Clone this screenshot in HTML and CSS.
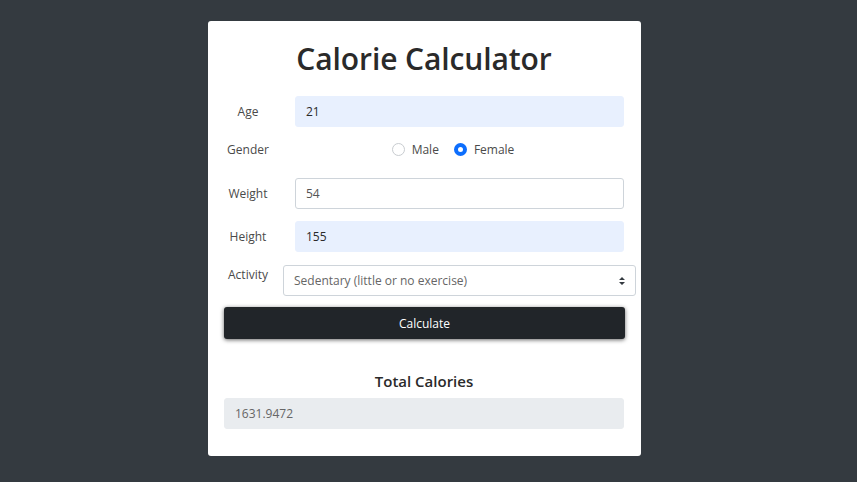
FILE: index.html
```html
<!DOCTYPE html>
<html>
<head>
<meta charset="utf-8">
<link rel="stylesheet" href="styles.css">
</head>
<body>
<div class="card">
  <h1 class="title">Calorie Calculator</h1>
  <div class="row row-age">
    <span class="label">Age</span>
    <div class="field autofill">21</div>
  </div>
  <div class="row row-gender">
    <span class="label">Gender</span>
    <div class="radios">
      <span class="radio"><span class="dot"></span>Male</span>
      <span class="radio"><span class="dot checked"></span>Female</span>
    </div>
  </div>
  <div class="row row-weight">
    <span class="label">Weight</span>
    <div class="field">54</div>
  </div>
  <div class="row row-height">
    <span class="label">Height</span>
    <div class="field autofill">155</div>
  </div>
  <div class="row row-activity">
    <span class="label label-up">Activity</span>
    <div class="field select">Sedentary (little or no exercise)
      <svg class="caret" width="8" height="10" viewBox="0 0 8 10"><path d="M1 4 L4 1 L7 4 Z M1 6 L4 9 L7 6 Z" fill="#343a40"/></svg>
    </div>
  </div>
  <div class="btn">Calculate</div>
  <h2 class="total">Total Calories</h2>
  <div class="field output">1631.9472</div>
</div>
</body>
</html>
```
FILE: styles.css
```css
html, body {
  margin: 0;
  padding: 0;
}
body {
  background: #343a40;
  font-family: "Open Sans", "Noto Sans", sans-serif;
  color: #212529;
  width: 857px;
  height: 482px;
  overflow: hidden;
}
.card {
  box-sizing: border-box;
  width: 433px;
  height: 435px;
  margin: 21px 0 0 208px;
  background: #fff;
  border-radius: 3px;
  padding: 0 17px 0 16px;
  display: flex;
  flex-direction: column;
}
.title {
  margin: 18px 0 0 0;
  text-align: center;
  font-size: 30px;
  font-weight: 600;
  line-height: 40px;
  color: #2a2a2a;
  letter-spacing: -0.1px;
}
.row {
  display: flex;
  align-items: center;
}
.label {
  width: 48px;
  text-align: center;
  font-size: 12px;
  color: #4a4a4a;
  flex: none;
}
.label-up {
  align-self: flex-start;
  margin-top: 1px;
}
.field {
  box-sizing: border-box;
  height: 31px;
  flex: 1;
  margin-left: 23px;
  border: 1px solid #ced4da;
  border-radius: 3px;
  font-size: 12px;
  color: #555;
  padding: 0 10px;
  display: flex;
  align-items: center;
  background: #fff;
}
.autofill {
  background: #e8f0fe;
  border-color: #e8f0fe;
  color: #2a2a2a;
}
.row-age { margin-top: 17px; }
.row-gender { margin-top: 11px; height: 22px; }
.row-weight { margin-top: 18px; }
.row-height { margin-top: 12px; }
.row-activity { margin-top: 13px; align-items: flex-start; }
.radios {
  flex: 1;
  display: flex;
  justify-content: center;
  gap: 15px;
  font-size: 12px;
  color: #4a4a4a;
  padding-left: 10px;
}
.radio {
  display: flex;
  align-items: center;
  gap: 7px;
}
.dot {
  box-sizing: border-box;
  width: 13px;
  height: 13px;
  border-radius: 50%;
  border: 1px solid #c8ccd0;
  background: #fff;
}
.dot.checked {
  border: 4px solid #0d6efd;
  background: #fff;
}
.select {
  margin-left: 11px;
  margin-right: -12px;
  height: 31px;
  justify-content: space-between;
  padding-right: 9px;
  color: #666;
}
.caret { flex: none; }
.btn {
  margin-top: 11px;
  height: 32px;
  background: #212529;
  color: #fff;
  border-radius: 3px;
  font-size: 12px;
  display: flex;
  align-items: center;
  justify-content: center;
  box-shadow: 0 1px 4px rgba(0,0,0,0.6);
  margin-right: -1px;
}
.total {
  margin: 31px 0 0 0;
  text-align: center;
  font-size: 15px;
  font-weight: 600;
  line-height: 22px;
  color: #2a2a2a;
}
.output {
  margin: 6px 0 0 0;
  flex: none;
  background: #e9ecef;
  border-color: #e9ecef;
  color: #666;
}
```
